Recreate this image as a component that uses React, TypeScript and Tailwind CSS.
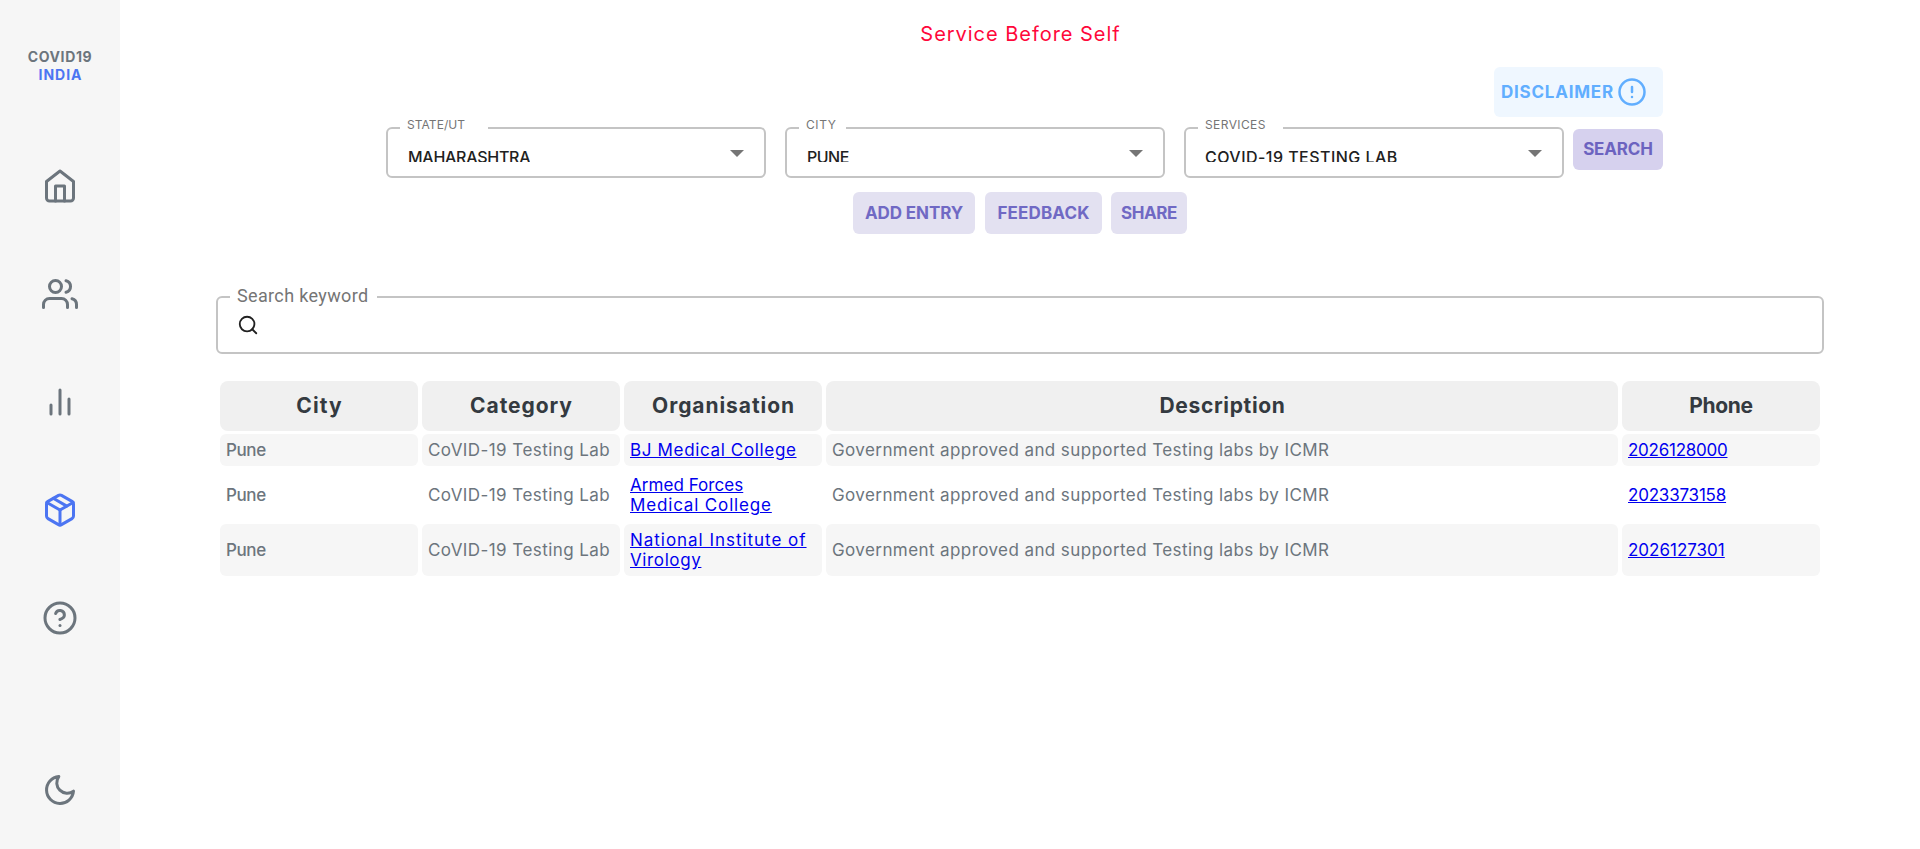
import { FiHome, FiUsers, FiBarChart2, FiPackage, FiHelpCircle, FiMoon, FiSearch, FiAlertCircle } from "react-icons/fi";

type SelectProps = {
  label: string;
  value: string;
  labelClass: string;
  valueClass: string;
};

function Select({ label, value, labelClass, valueClass }: SelectProps) {
  return (
    <fieldset className="h-[56px] w-[380px] min-w-0 rounded-[6px] border-2 border-[#c4c4c4] pr-[20px] pl-[12px]">
      <legend className={`h-3 pl-[7px] text-[12px] leading-[6px] whitespace-nowrap text-[#757575] ${labelClass}`}>{label}</legend>
      <div className="flex items-start justify-between pt-[13px] pl-[7px]">
        <div className={`h-[15px] overflow-hidden text-[16px] leading-5 font-medium whitespace-nowrap text-[#212121] ${valueClass}`}>{value}</div>
        <svg className="mt-[3px] h-[7px] w-[14px] fill-[#757575]" viewBox="0 0 14 7">
          <path d="M0 0L7 7L14 0Z" />
        </svg>
      </div>
    </fieldset>
  );
}

const headers = [
  { title: "City", style: "w-[198px] tracking-[1.1px] pl-px" },
  { title: "Category", style: "w-[198px] tracking-[0.94px] pl-px" },
  { title: "Organisation", style: "w-[198px] tracking-[0.93px] pl-px" },
  { title: "Description", style: "tracking-[0.66px] pl-px" },
  { title: "Phone", style: "w-[198px] tracking-[-0.29px]" },
];

const rows = [
  {
    org: [{ text: "BJ Medical College", style: "tracking-[0.65px]" }],
    phone: "2026128000",
    phoneStyle: "tracking-[-0.25px]",
  },
  {
    org: [
      { text: "Armed Forces", style: "tracking-[0.05px]" },
      { text: "Medical College", style: "tracking-[0.84px]" },
    ],
    phone: "2023373158",
    phoneStyle: "tracking-[-0.2px]",
  },
  {
    org: [
      { text: "National Institute of", style: "tracking-[0.97px]" },
      { text: "Virology", style: "tracking-[0.62px]" },
    ],
    phone: "2026127301",
    phoneStyle: "tracking-[0px]",
  },
];

const cell = "rounded-[6px] p-1.5 group-odd:bg-[#f6f6f6]";

export default function App() {
  return (
    <div className="flex h-[849px] bg-white font-['Inter',sans-serif]">
      <aside className="flex w-[120px] shrink-0 flex-col items-center bg-[#f6f6f6] pt-12 text-[#6c757d]">
        <div className="flex h-[120px] flex-col items-center text-[14px] leading-[18px] font-bold">
          <span className="tracking-[0.63px]">COVID19</span>
          <span className="pl-px tracking-[0.97px] text-[#4c75f2]">INDIA</span>
        </div>
        <nav className="flex flex-col items-center gap-[72px]">
          <FiHome size={36} />
          <FiUsers size={36} />
          <FiBarChart2 size={36} />
          <FiPackage size={36} className="text-[#4c75f2]" />
          <FiHelpCircle size={36} />
        </nav>
        <FiMoon size={36} className="mt-[136px]" />
      </aside>

      <main className="flex min-w-0 flex-1 flex-col px-24">
        <h1 className="h-[67px] pt-[22px] pl-px text-center text-[20px] leading-6 tracking-[0.97px] text-[#ff073a]">Service Before Self</h1>

        <div className="flex flex-col pr-[161px] pl-[170px]">
          <button className="flex h-[50px] w-[169px] items-center gap-[3px] self-end rounded-[6px] bg-[#eff7ff] pl-[7px] text-[17px] font-bold text-[#61aeff]">
            <span className="pt-px tracking-[0.77px]">DISCLAIMER</span>
            <FiAlertCircle size={30} />
          </button>
          <div className="flex h-[61px] items-end gap-[19px]">
            <Select label="STATE/UT" value="MAHARASHTRA" labelClass="w-[88px] tracking-[0.05px]" valueClass="pl-px tracking-[-0.27px]" />
            <Select label="CITY" value="PUNE" labelClass="w-[47px] tracking-[0.6px]" valueClass="pl-px tracking-[-0.5px]" />
            <Select label="SERVICES" value="COVID-19 TESTING LAB" labelClass="w-[85px] tracking-[0.4px]" valueClass="tracking-[0.46px]" />
            <button className="mb-2 -ml-[10px] h-[41px] w-[90px] rounded-[6px] bg-[#d6d1ee] pt-px text-[17px] font-bold tracking-[-0.15px] text-[#6c63c0]">SEARCH</button>
          </div>
        </div>

        <div className="mt-[14px] flex justify-center text-[17px] font-bold text-[#7069c4]">
          <button className="h-[42px] w-[122px] rounded-[6px] bg-[#e3e1f1] pt-px tracking-[-0.1px]">ADD ENTRY</button>
          <button className="ml-[10px] h-[42px] w-[117px] rounded-[6px] bg-[#e3e1f1] pt-px tracking-[0.15px]">FEEDBACK</button>
          <button className="ml-[9px] h-[42px] w-[76px] rounded-[6px] bg-[#e3e1f1] pt-px tracking-[-0.4px]">SHARE</button>
        </div>

        <fieldset className="mt-[53px] h-[67px] rounded-[6px] border-2 border-[#c4c4c4] px-3">
          <legend className="h-5 w-[147px] pl-[7px] font-['Roboto',sans-serif] text-[18px] leading-[18px] tracking-[0.35px] whitespace-nowrap text-[#757575]">Search keyword</legend>
          <FiSearch size={22} className="mt-[7px] ml-[7px] text-[#212121]" />
        </fieldset>

        <table className="mt-6 w-full table-fixed border-separate border-spacing-x-1 border-spacing-y-[3px] text-[17px] leading-5 text-[#6c757d]">
          <thead>
            <tr className="h-[50px] text-[21px] text-[#343a40]">
              {headers.map((h) => (
                <th key={h.title} className={`rounded-[8px] bg-[#f0f0f0] ${h.style}`}>{h.title}</th>
              ))}
            </tr>
          </thead>
          <tbody>
            {rows.map((r) => (
              <tr key={r.phone} className="group">
                <td className={`${cell} font-medium tracking-[-0.4px]`}>Pune</td>
                <td className={`${cell} tracking-[0.44px] whitespace-nowrap`}>CoVID-19 Testing Lab</td>
                <td className={`${cell} text-[#0000ee]`}>
                  {r.org.map((line) => (
                    <div key={line.text} className={`whitespace-nowrap underline ${line.style}`}>{line.text}</div>
                  ))}
                </td>
                <td className={`${cell} tracking-[0.41px]`}>Government approved and supported Testing labs by ICMR</td>
                <td className={`${cell} text-[#0000ee] underline ${r.phoneStyle}`}>{r.phone}</td>
              </tr>
            ))}
          </tbody>
        </table>
      </main>
    </div>
  );
}
